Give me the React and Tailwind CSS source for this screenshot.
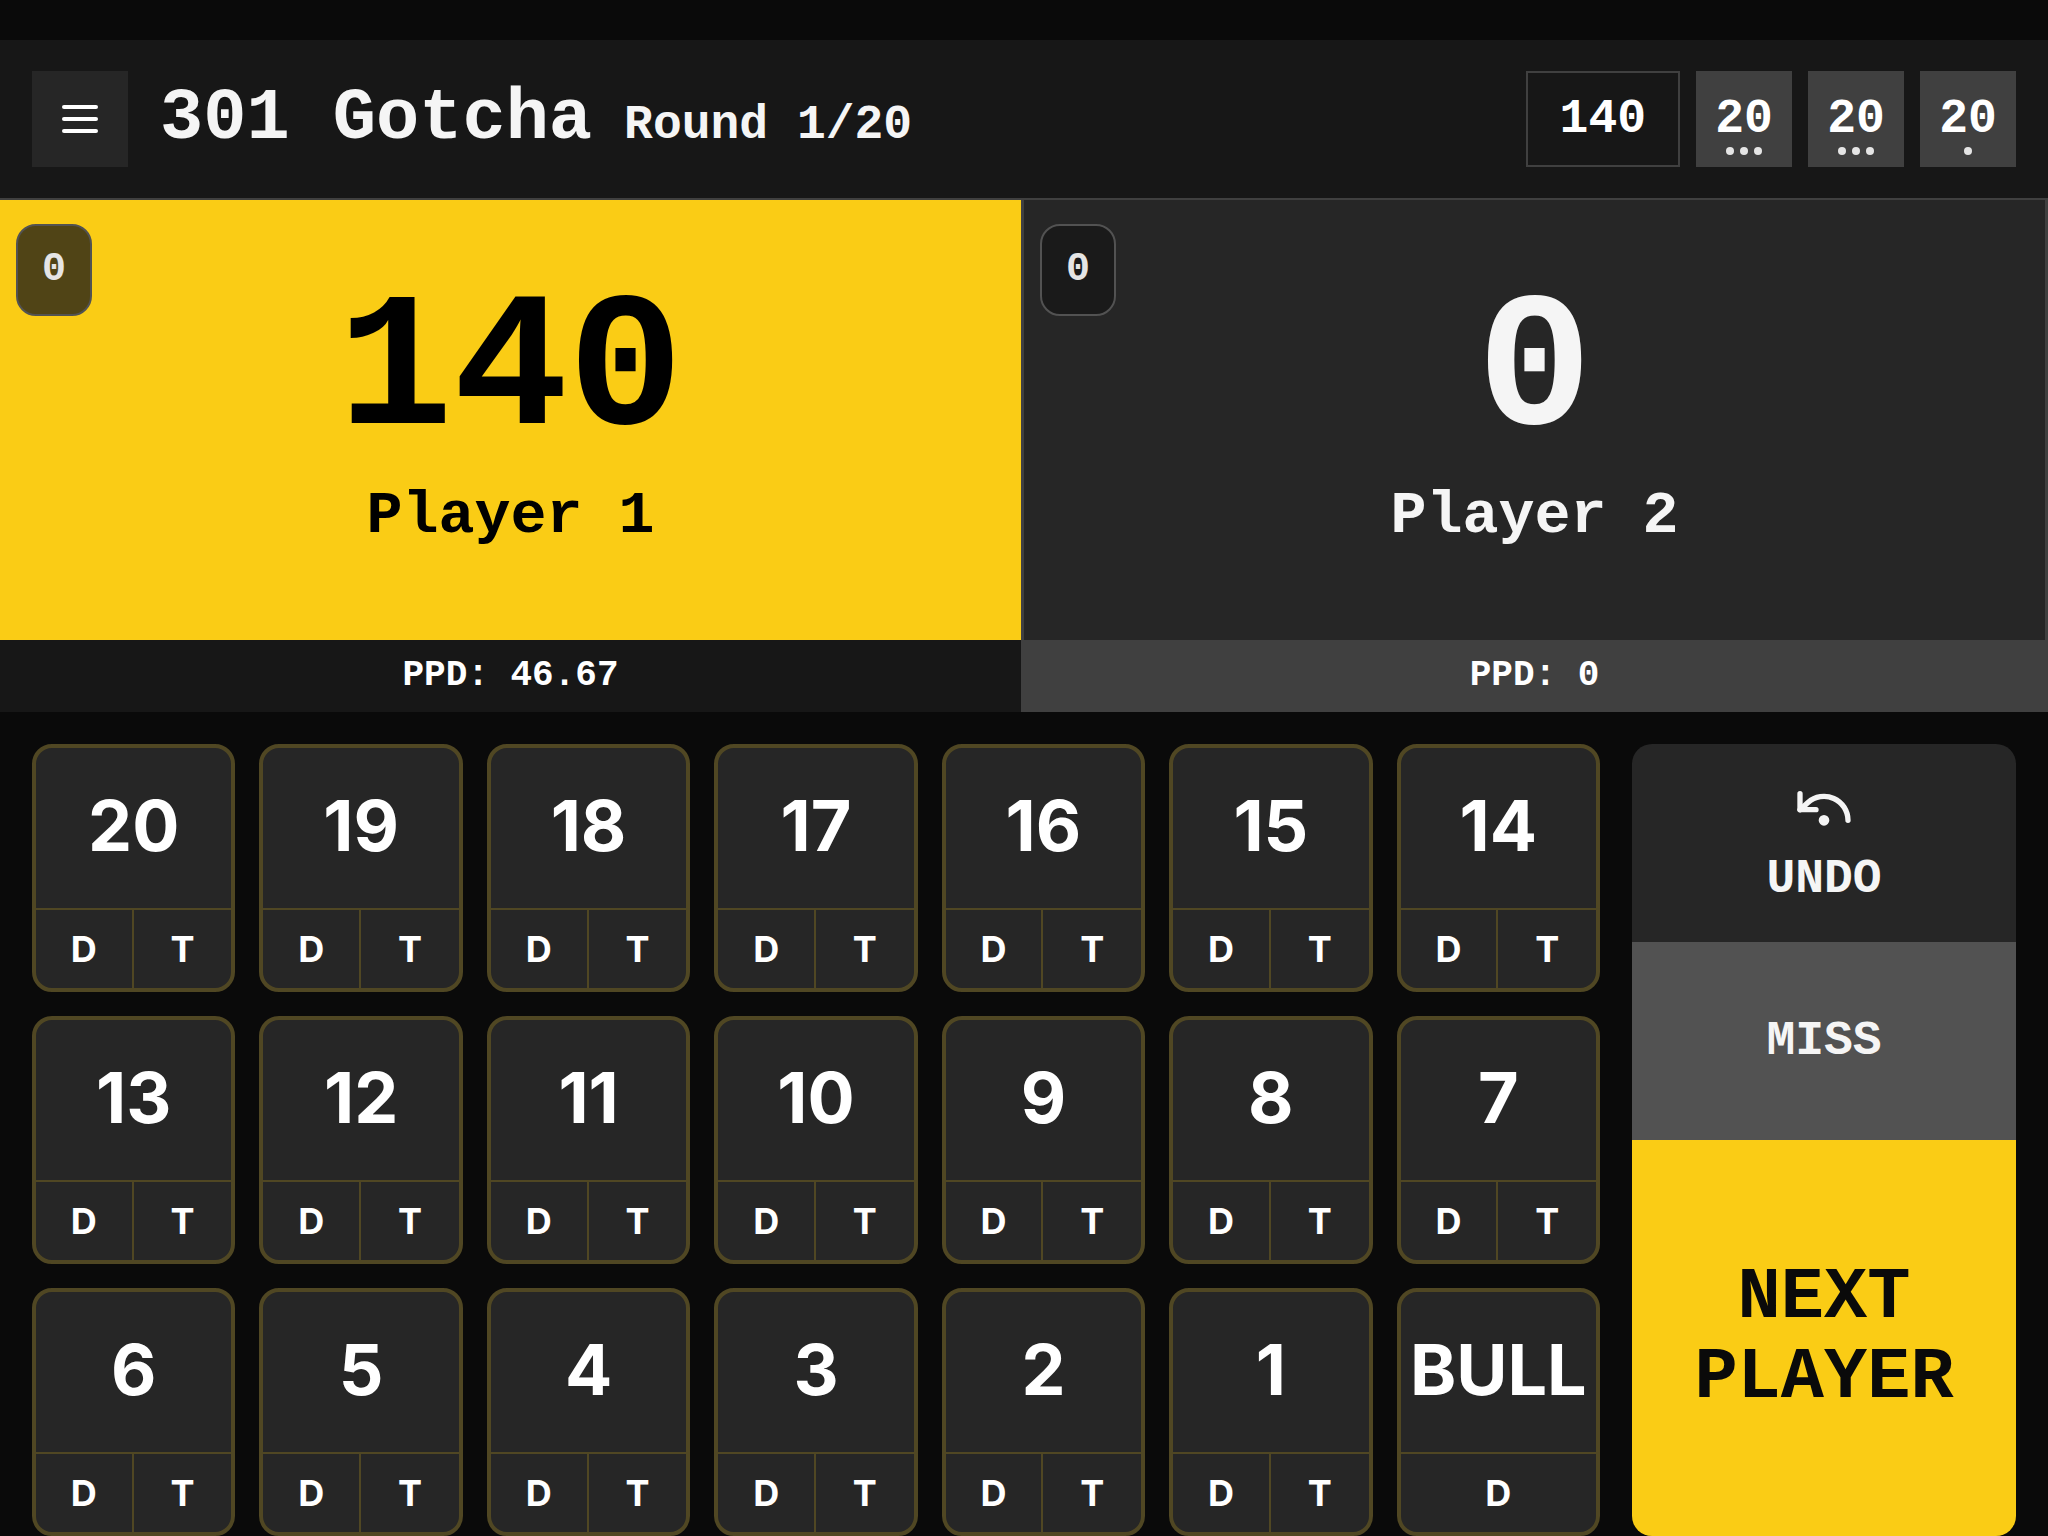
import React from 'react';
import { UndoDot } from 'lucide-react';

const players = [
  { id: 1, name: 'Player 1', score: 140, wins: 0, ppd: '46.67', active: true },
  { id: 2, name: 'Player 2', score: 0, wins: 0, ppd: '0', active: false },
];

const throws = [
  { id: 1, value: 20, multiplier: 3 },
  { id: 2, value: 20, multiplier: 3 },
  { id: 3, value: 20, multiplier: 1 },
];

const targets = [20, 19, 18, 17, 16, 15, 14, 13, 12, 11, 10, 9, 8, 7, 6, 5, 4, 3, 2, 1, 'BULL'];

function MenuIcon() {
  return (
    <svg viewBox="0 0 24 24" className="size-12" fill="none" stroke="currentColor" strokeWidth="2" strokeLinecap="round">
      <path d="M4 6h16" />
      <path d="M4 12h16" />
      <path d="M4 18h16" />
    </svg>
  );
}

function Throw({ value, multiplier }) {
  return (
    <div className="relative flex size-24 items-center justify-center bg-neutral-700 text-5xl font-bold text-white">
      {value}
      <div className="absolute inset-x-0 bottom-3 flex justify-center gap-1.5">
        {Array.from({ length: multiplier }, (_, i) => (
          <span key={i} className="size-2 rounded-full bg-neutral-200" />
        ))}
      </div>
    </div>
  );
}

function Header() {
  return (
    <header className="flex h-40 items-center justify-between border-b-2 border-neutral-700 bg-neutral-900 px-8">
      <div className="flex items-center gap-8">
        <button aria-label="Menu" className="flex size-24 items-center justify-center bg-neutral-800 text-white">
          <MenuIcon />
        </button>
        <div className="flex items-baseline gap-8 font-bold text-neutral-100">
          <h1 className="text-7xl">301 Gotcha</h1>
          <p className="text-5xl">Round 1/20</p>
        </div>
      </div>
      <div className="flex gap-4">
        <div className="flex h-24 items-center border-2 border-neutral-700 px-8 text-5xl font-bold text-white">140</div>
        {throws.map((t) => (
          <Throw key={t.id} value={t.value} multiplier={t.multiplier} />
        ))}
      </div>
    </header>
  );
}

function Player({ player }) {
  const { name, score, wins, ppd, active } = player;
  return (
    <section className="flex flex-1 flex-col border-r-3 border-neutral-700">
      <div
        className={`relative flex h-[440px] flex-col items-center justify-center font-bold ${
          active ? 'bg-[#facc15] text-black' : 'bg-neutral-800 text-neutral-100'
        }`}
      >
        <span className="absolute top-6 left-4 flex h-23 items-center rounded-[20px] border-2 border-neutral-600 bg-neutral-900/75 px-6 text-[40px] text-neutral-200">
          {wins}
        </span>
        <div className="text-[192px] leading-[192px]">{score}</div>
        <h2 className="text-6xl leading-[96px]">{name}</h2>
      </div>
      <div
        className={`flex h-18 items-center justify-center text-4xl font-bold text-white ${
          active ? 'bg-neutral-900' : 'bg-neutral-700'
        }`}
      >
        PPD: {ppd}
      </div>
    </section>
  );
}

function Target({ value }) {
  const isBull = value === 'BULL';
  return (
    <div className="flex min-w-0 flex-col overflow-hidden rounded-[20px] border-4 border-[#504723] bg-neutral-800 text-white">
      <button className="flex flex-1 items-center justify-center pb-1 text-[70px] leading-none font-bold">{value}</button>
      <div className="flex h-20 border-t-2 border-[#504723] text-4xl font-bold">
        <button className={isBull ? 'w-full' : 'w-1/2 border-r-2 border-[#504723]'}>D</button>
        {!isBull && <button className="w-1/2">T</button>}
      </div>
    </div>
  );
}

export default function App() {
  return (
    <div className="flex min-h-screen flex-col bg-neutral-950 pt-10 font-['Liberation_Mono',monospace]">
      <Header />
      <div className="flex">
        {players.map((p) => (
          <Player key={p.id} player={p} />
        ))}
      </div>
      <main className="flex flex-1 gap-8 px-8 pt-8">
        <div className="grid flex-1 auto-rows-fr grid-cols-7 gap-6 font-['Inter',sans-serif]">
          {targets.map((value) => (
            <Target key={value} value={value} />
          ))}
        </div>
        <div className="grid w-96 grid-rows-4 overflow-hidden rounded-[20px] text-5xl font-bold text-neutral-100">
          <button className="flex flex-col items-center justify-center gap-2 bg-neutral-800">
            <UndoDot size={64} />
            <span className="leading-[64px]">UNDO</span>
          </button>
          <button className="bg-neutral-600">MISS</button>
          <button className="row-span-2 bg-[#facc15] px-8 text-7xl leading-[80px] text-neutral-950">NEXT PLAYER</button>
        </div>
      </main>
    </div>
  );
}
